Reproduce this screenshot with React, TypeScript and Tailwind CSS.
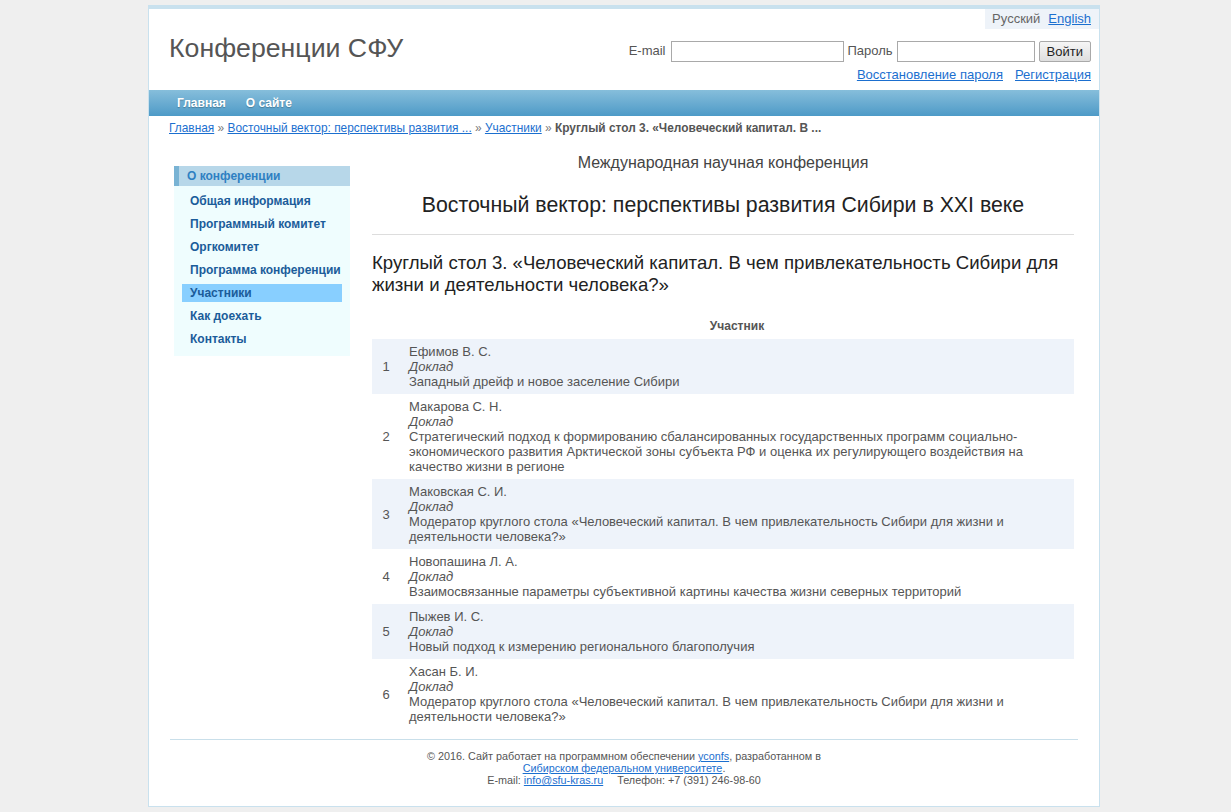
import React from 'react';

const rows = [
  { n: 1, name: 'Ефимов В. С.', text: 'Западный дрейф и новое заселение Сибири' },
  {
    n: 2,
    name: 'Макарова С. Н.',
    text: 'Стратегический подход к формированию сбалансированных государственных программ социально-экономического развития Арктической зоны субъекта РФ и оценка их регулирующего воздействия на качество жизни в регионе',
  },
  {
    n: 3,
    name: 'Маковская С. И.',
    text: 'Модератор круглого стола «Человеческий капитал. В чем привлекательность Сибири для жизни и деятельности человека?»',
  },
  { n: 4, name: 'Новопашина Л. А.', text: 'Взаимосвязанные параметры субъективной картины качества жизни северных территорий' },
  { n: 5, name: 'Пыжев И. С.', text: 'Новый подход к измерению регионального благополучия' },
  {
    n: 6,
    name: 'Хасан Б. И.',
    text: 'Модератор круглого стола «Человеческий капитал. В чем привлекательность Сибири для жизни и деятельности человека?»',
  },
];

const menu = [
  'Общая информация',
  'Программный комитет',
  'Оргкомитет',
  'Программа конференции',
  'Участники',
  'Как доехать',
  'Контакты',
];

export default function App() {
  return (
    <div className="min-h-[812px] bg-[#efefef] pt-[5px] pb-[5px] font-['Liberation_Sans',Arial,sans-serif] text-[#555]">
      <div className="w-[952px] ml-[148px] bg-white border border-[#c9e1ee] border-t-4">
        {/* header */}
        <div className="h-[81px] flex flex-col">
          <div className="flex justify-end">
            <div className="bg-[#eef3f9] h-[20px] leading-[20px] text-[13px] pl-[7px] pr-[8px] flex gap-[8px]">
              <span className="text-[#666]">Русский</span>
              <a className="text-[#1b6fcf] underline">English</a>
            </div>
          </div>
          <div className="flex justify-between pl-[20px] pr-[8px]">
            <div className="text-[26.7px] leading-[30px] text-[#555] mt-[4px]">Конференции СФУ</div>
            <div className="flex flex-col items-end mt-[11px] text-[13px]">
              <div className="flex items-center gap-[4px] h-[22px]">
                <span className="mr-[1px]">E-mail</span>
                <input className="w-[173px] h-[21px] border border-[#a9a9a9] bg-white" />
                <span>Пароль</span>
                <input className="w-[138px] h-[21px] border border-[#a9a9a9] bg-white" />
                <button className="h-[21px] px-[7px] border border-[#a9a9a9] rounded-[2px] bg-gradient-to-b from-[#f6f6f6] to-[#dedede] text-[13px] text-[#222] leading-[19px]">
                  Войти
                </button>
              </div>
              <div className="flex gap-[12px] mt-[5px] leading-[15px]">
                <a className="text-[#1b6fcf] underline">Восстановление пароля</a>
                <a className="text-[#1b6fcf] underline">Регистрация</a>
              </div>
            </div>
          </div>
        </div>

        {/* nav */}
        <div className="h-[26px] bg-gradient-to-b from-[#86bedb] to-[#4d9ac7] flex items-center pl-[28px] gap-[20px] text-[12px] font-bold text-white [text-shadow:0_1px_1px_rgba(0,0,0,0.25)]">
          <span>Главная</span>
          <span>О сайте</span>
        </div>

        {/* breadcrumb */}
        <div className="pl-[20px] pt-[5px] text-[11.9px] leading-[14px] text-[#777]">
          <a className="text-[#1b6fcf] underline">Главная</a> »{' '}
          <a className="text-[#1b6fcf] underline">Восточный вектор: перспективы развития ...</a> »{' '}
          <a className="text-[#1b6fcf] underline">Участники</a> »{' '}
          <span className="font-bold text-[#555]">Круглый стол 3. «Человеческий капитал. В ...</span>
        </div>

        {/* body */}
        <div className="flex gap-[22px] pl-[25px] pr-[25px] pt-[17px]">
          <div className="w-[176px] shrink-0 mt-[14px]">
            <div className="h-[20px] leading-[20px] bg-[#b7d7e9] border-l-[5px] border-[#79b3d4] pl-[8px] text-[12px] font-bold text-[#2f80c2]">
              О конференции
            </div>
            <div className="bg-[#effdfe] pt-[6px] pb-[8px] flex flex-col gap-[5px]">
              {menu.map((m) => (
                <div
                  key={m}
                  className={`mx-[8px] h-[18px] leading-[18px] pl-[8px] text-[12px] font-bold text-[#1b5c9a] ${
                    m === 'Участники' ? 'bg-[#88cfff]' : ''
                  }`}
                >
                  {m}
                </div>
              ))}
            </div>
          </div>

          <div className="flex-1">
            <div className="text-center text-[16px] leading-[20px] text-[#444] mt-[1px]">Международная научная конференция</div>
            <div className="text-center text-[21.3px] leading-[24px] text-[#222] mt-[20px]">
              Восточный вектор: перспективы развития Сибири в XXI веке
            </div>
            <div className="border-t border-[#ddd] mt-[17px]" />
            <div className="text-[18.6px] leading-[22px] text-[#222] mt-[17px]">
              Круглый стол 3. «Человеческий капитал. В чем привлекательность Сибири для жизни и деятельности человека?»
            </div>
            <table className="w-full mt-[17px] text-[13px] leading-[15px] border-collapse">
              <thead>
                <tr>
                  <th className="w-[28px]" />
                  <th className="text-[12px] font-bold text-[#555] h-[26px] align-middle">Участник</th>
                </tr>
              </thead>
              <tbody>
                {rows.map((r) => (
                  <tr key={r.n} className={r.n % 2 === 1 ? 'bg-[#eef3fa]' : ''}>
                    <td className="text-center align-middle">{r.n}</td>
                    <td className="py-[5px] pl-[9px] pr-[20px]">
                      <div>{r.name}</div>
                      <div className="italic">Доклад</div>
                      <div>{r.text}</div>
                    </td>
                  </tr>
                ))}
              </tbody>
            </table>
          </div>
        </div>

        {/* footer */}
        <div className="mx-[21px] mt-[10px] border-t border-[#c9dfea] pt-[10px] pb-[20px] text-center text-[10.8px] leading-[12px] text-[#555]">
          <div>
            © 2016. Сайт работает на программном обеспечении <a className="text-[#1b6fcf] underline">yconfs</a>, разработанном в
          </div>
          <div>
            <a className="text-[#1b6fcf] underline">Сибирском федеральном университете</a>.
          </div>
          <div>
            E-mail: <a className="text-[#1b6fcf] underline">info@sfu-kras.ru</a>
            <span className="ml-[14px]">Телефон: +7 (391) 246-98-60</span>
          </div>
        </div>
      </div>
    </div>
  );
}
